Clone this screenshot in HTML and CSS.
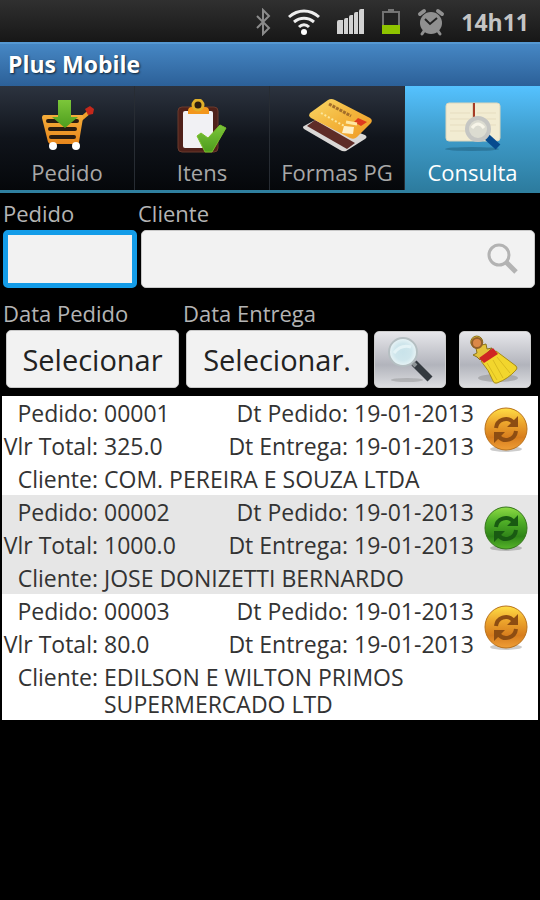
FILE: index.html
```
<!DOCTYPE html>
<html lang="pt-BR">
<head>
<meta charset="utf-8">
<meta name="viewport" content="width=device-width, initial-scale=1">
<title>Plus Mobile</title>
<link rel="stylesheet" href="styles.css">
</head>
<body>
<svg class="defs" aria-hidden="true">
  <defs>
    <linearGradient id="orange" x2="0" y2="1"><stop offset="0" stop-color="#ffdf45"/><stop offset=".35" stop-color="#eda62d"/><stop offset=".7" stop-color="#d77d1d"/><stop offset="1" stop-color="#ef9e36"/></linearGradient>
    <linearGradient id="green" x2="0" y2="1"><stop offset="0" stop-color="#8fdc45"/><stop offset=".35" stop-color="#4fae27"/><stop offset=".7" stop-color="#2f8418"/><stop offset="1" stop-color="#57b52a"/></linearGradient>
    <linearGradient id="leaf" x2="0" y2="1"><stop offset="0" stop-color="#7cc63a"/><stop offset="1" stop-color="#4d9c1d"/></linearGradient>
    <linearGradient id="basket" x2="0" y2="1"><stop offset="0" stop-color="#f5ad3a"/><stop offset="1" stop-color="#e8871c"/></linearGradient>
    <linearGradient id="gold" x2="1" y2="1"><stop offset="0" stop-color="#f9d867"/><stop offset=".5" stop-color="#f3b53c"/><stop offset="1" stop-color="#ef9a26"/></linearGradient>
    <radialGradient id="glass"><stop offset="0" stop-color="#c9e3ea"/><stop offset=".6" stop-color="#cfe6ec"/><stop offset="1" stop-color="#eaf5f7"/></radialGradient>
    <symbol id="cycle" viewBox="0 0 44 46">
      <path fill="none" stroke-width="4" d="M12 21a10 10 0 0 1 17-6M32 24a10 10 0 0 1-17 6"/>
      <path stroke="none" d="M34 9v11H23zM10 36V25h11z"/>
    </symbol>
  </defs>
</svg>

<header class="status">
  <svg width="16" height="28" viewBox="0 0 16 28" fill="none" stroke="#8b8b8b" stroke-width="2"><path d="M2 8l12 12-6 6V2l6 6L2 20"/></svg>
  <svg width="34" height="28" viewBox="0 0 34 28" fill="none" stroke="#eee" stroke-width="3"><path d="M2 9c9-8 21-8 30 0M7 14c6-5 14-5 20 0M12 19c3-3 7-3 10 0"/><circle cx="17" cy="24" r="3" fill="#fff" stroke="none"/></svg>
  <svg width="28" height="28" viewBox="0 0 28 28" fill="#d2d2d2"><path d="M0 14q0-2 2-2h4v14H0z"/><path d="M7 12q0-2 2-2h2v16H7zM12 9q0-2 2-2h2v19h-4zM17 6q0-2 2-2h2v22h-4zM22 3q0-2 2-2h3v25h-5z"/></svg>
  <svg width="20" height="28" viewBox="0 0 20 28"><path d="M2 4h16v21H2z" fill="#222" stroke="#727272" stroke-width="2"/><path d="M7 1h6v3H7z" fill="#777"/><path d="M1 17h18v9H1z" fill="#8fc400"/></svg>
  <svg width="28" height="28" viewBox="0 0 28 28"><g stroke="#909090" stroke-width="4" stroke-linecap="round"><path d="M3 6l4-3M25 6l-4-3"/><path d="M7 23l-2 3M21 23l2 3" stroke-width="3"/></g><circle cx="14" cy="15" r="11" fill="#909090"/><path d="M8 11l5 5 7-6" fill="none" stroke="#222" stroke-width="2"/></svg>
  <time class="clock">14h11</time>
</header>

<h1 class="title">Plus Mobile</h1>

<nav class="tabs">
  <a class="tab" href="#pedido">
    <svg width="56" height="56" viewBox="0 0 56 56">
      <path d="M42 20l7-6" stroke="#f0a02b" stroke-width="4"/><path d="M46 10l5-3 4 3-1 5-5 1z" fill="#c4281b"/>
      <path d="M5 16h38q2 0 1 3l-4 24q0 2-3 2H12q-2 0-3-2L3 19q0-3 2-3z" fill="url(#basket)"/>
      <path d="M9 22h29M11 30h25M12 38h23" stroke="#2a1c10" stroke-width="4" stroke-linecap="round"/>
      <path d="M19 1h13v17h7L26 29 13 18h6z" fill="url(#leaf)"/>
      <circle cx="14" cy="47" r="4" fill="#fff"/><circle cx="37" cy="47" r="4" fill="#fff"/>
    </svg>
    <span>Pedido</span></a>
  <a class="tab" href="#itens">
    <svg width="56" height="56" viewBox="0 0 56 56">
      <rect x="4" y="8" width="40" height="45" rx="4" fill="#4f211a" stroke="#6b3a2d"/>
      <rect x="9" y="12" width="30" height="37" rx="2" fill="#f1f1f4"/>
      <path d="M14 12q0-4 4-4h2a6 6 0 0 1 9 0h2q4 0 4 4v3H14z" fill="#f3971c"/>
      <circle cx="24" cy="6" r="5" fill="#2b1c10" stroke="#e0b02a" stroke-width="3"/>
      <path d="M23 37l4-3 7 5 12-13 6 3-14 24h-7z" fill="url(#leaf)" stroke="#79bd28" stroke-linejoin="round"/>
    </svg>
    <span>Itens</span></a>
  <a class="tab" href="#formas">
    <svg width="70" height="56" viewBox="0 0 70 56">
      <path d="M2 27l15-8 46 17q3 2 0 4L44 52q-3 1-6-1L2 30q-2-2 0-3z" fill="#dad8d6"/>
      <path d="M9 24l4-3 40 23-8 6L5 27z" fill="#5e2c27"/>
      <path d="M8 14L26 1q3-2 7 0l35 18q3 2 1 5L55 38q-3 3-7 1L9 19q-3-2-1-5z" fill="url(#gold)"/>
      <path d="M27 5l22 12" stroke="#a36e2a" stroke-width="3" stroke-dasharray="3 1"/><path d="M19 14l25 14" stroke="#fbe79d" stroke-width="2" stroke-dasharray="2 2"/>
      <path d="M56 19l9 4-6 4-7-4z" fill="#de3a1e"/><path d="M42 27l10 1-1 7-11-1z" fill="#fff0c8"/><path d="M44 23l11 2" stroke="#ffe7a2" stroke-width="3"/>
    </svg>
    <span>Formas PG</span></a>
  <a class="tab tab-active" href="#consulta" aria-current="page">
    <svg width="58" height="56" viewBox="0 0 58 56">
      <ellipse cx="28" cy="50" rx="27" ry="2" fill="#21617f" opacity=".55"/>
      <rect x="2" y="4" width="54" height="38" rx="3" fill="#f2ecd2" stroke="#dcd6bc"/>
      <path d="M6 14h20M6 20h20M6 26h20M6 32h20M33 14h19M33 20h19M33 26h19" stroke="#e6ddc0"/>
      <path d="M29 4v37" stroke="#cbbf9e"/><path d="M30 4v16" stroke="#a63b27" stroke-width="2"/>
      <path d="M43 38l11 10" stroke="#074b8f" stroke-width="7"/>
      <circle cx="34" cy="30" r="11" fill="#dcdcd1" stroke="#c5c6c3" stroke-width="4"/><path d="M28 29q6-8 12 0" stroke="#f7f5e9" stroke-width="3" fill="none"/>
    </svg>
    <span>Consulta</span></a>
</nav>

<main>
  <form class="search">
    <div class="row row-text">
      <div class="field"><label for="pedido">Pedido</label><input id="pedido" class="box box-focus" type="text"></div>
      <div class="field"><label for="cliente">Cliente</label>
        <div class="box box-client"><input id="cliente" type="text">
          <svg width="32" height="32" viewBox="0 0 32 32" fill="none" stroke="#b3b3b3"><circle cx="12" cy="12" r="10" stroke-width="3"/><path d="M19 19l10 10" stroke-width="5"/></svg>
        </div></div>
    </div>
    <div class="row row-dates">
      <div class="field"><label for="data-pedido">Data Pedido</label><button id="data-pedido" class="box date" type="button">Selecionar</button></div>
      <div class="field"><label for="data-entrega">Data Entrega</label><button id="data-entrega" class="box date" type="button">Selecionar.</button></div>
      <button class="tool" type="button" aria-label="Pesquisar">
        <svg width="50" height="50" viewBox="0 0 50 50"><ellipse cx="22" cy="45" rx="16" ry="2" fill="#777" opacity=".35"/><path d="M29 28l16 16" stroke="#343a40" stroke-width="7"/><path d="M26 26l5 5" stroke="#8d9396" stroke-width="4"/><circle cx="18" cy="17" r="14" fill="url(#glass)" stroke="#b5bfc2" stroke-width="2"/><path d="M9 18q7-9 17-6" fill="none" stroke="#e4f3f6" stroke-width="3"/></svg>
      </button>
      <button class="tool" type="button" aria-label="Limpar">
        <svg width="50" height="50" viewBox="0 0 50 50"><ellipse cx="28" cy="43" rx="20" ry="4" fill="#777" opacity=".4"/><path d="M3 20l4-2-1-5a6 6 0 1 1 6-3l4-1 1 5 5-1-12 12-3-3z" fill="#e3c23a" stroke="#8b741b"/><circle cx="7" cy="8" r="5" fill="#db8848" stroke="#93602a" stroke-width="2"/><path d="M11 26l15-10 20 15q2 2 0 4-8 9-19 13-3 1-4-2-4-11-12-20z" fill="#f2d62d" stroke="#a68c17"/><path d="M17 28l10 17M23 25l10 18M27 22l13 16" stroke="#d9bb20" fill="none"/><path d="M9 23l14-10 5 6-14 9z" fill="#cf2623"/></svg>
      </button>
    </div>
  </form>

  <ul class="orders">
    <li class="order">
      <dl>
        <dt>Pedido:</dt><dd>00001</dd><dt>Dt Pedido:</dt><dd>19-01-2013</dd>
        <dt>Vlr Total:</dt><dd>325.0</dd><dt>Dt Entrega:</dt><dd>19-01-2013</dd>
        <dt>Cliente:</dt><dd class="client">COM. PEREIRA E SOUZA LTDA</dd>
      </dl>
      <svg class="sync sync-pending" viewBox="0 0 44 46"><ellipse cx="22" cy="42" rx="16" ry="3" class="shade"/><circle cx="22" cy="22" r="21"/><use href="#cycle" class="glyph"/></svg>
    </li>
    <li class="order">
      <dl>
        <dt>Pedido:</dt><dd>00002</dd><dt>Dt Pedido:</dt><dd>19-01-2013</dd>
        <dt>Vlr Total:</dt><dd>1000.0</dd><dt>Dt Entrega:</dt><dd>19-01-2013</dd>
        <dt>Cliente:</dt><dd class="client">JOSE DONIZETTI BERNARDO</dd>
      </dl>
      <svg class="sync sync-done" viewBox="0 0 44 46"><ellipse cx="22" cy="42" rx="16" ry="3" class="shade"/><circle cx="22" cy="22" r="21"/><use href="#cycle" class="glyph"/></svg>
    </li>
    <li class="order">
      <dl>
        <dt>Pedido:</dt><dd>00003</dd><dt>Dt Pedido:</dt><dd>19-01-2013</dd>
        <dt>Vlr Total:</dt><dd>80.0</dd><dt>Dt Entrega:</dt><dd>19-01-2013</dd>
        <dt>Cliente:</dt><dd class="client">EDILSON E WILTON PRIMOS SUPERMERCADO LTD</dd>
      </dl>
      <svg class="sync sync-pending" viewBox="0 0 44 46"><ellipse cx="22" cy="42" rx="16" ry="3" class="shade"/><circle cx="22" cy="22" r="21"/><use href="#cycle" class="glyph"/></svg>
    </li>
  </ul>
</main>
</body>
</html>
```
FILE: styles.css
```
* { box-sizing: border-box; }
body {
  margin: 0;
  min-height: 100vh;
  background: #000;
  color: #b4b4b4;
  font: 23px/27px "Open Sans", "Noto Sans", sans-serif;
}
button, input { font: inherit; }
.defs { position: absolute; width: 0; height: 0; }

.status {
  display: flex;
  align-items: center;
  justify-content: flex-end;
  gap: 16px;
  height: 42px;
  padding: 2px 11px 0 0;
  background: linear-gradient(#303030, #171717);
}
.clock { color: #c4c4c4; font-size: 23px; font-weight: 700; }

.title {
  margin: 0;
  height: 44px;
  padding: 0 8px;
  border-top: 2px solid #5598d2;
  background: linear-gradient(#4687c4, #2c6098);
  color: #fff;
  font-size: 23px;
  line-height: 40px;
  text-shadow: 1px 1px 2px #123;
}

.tabs {
  display: grid;
  grid-template-columns: repeat(4, 1fr);
  border-bottom: 3px solid #2f7f9f;
}
.tab {
  display: flex;
  flex-direction: column;
  align-items: center;
  gap: 4px;
  height: 104px;
  padding-top: 13px;
  border-right: 1px solid #272c33;
  background: linear-gradient(#2c333f, #10141b 50%, #05070a);
  color: #a8a8a8;
  font-size: 22px;
  text-decoration: none;
  white-space: nowrap;
}
.tab-active {
  border-right: 0;
  background: linear-gradient(#55c2ff, #3f9dcc 45%, #2d7c9f);
  color: #fff;
}

.search { padding: 7px 5px 8px 3px; }
.row { display: grid; }
.row-text { grid-template-columns: 135px 1fr; margin-bottom: 12px; }
.row-dates { grid-template-columns: 179fr 190fr 81fr 79fr; align-items: end; }
.field { display: flex; flex-direction: column; gap: 3px; min-width: 0; }
.field label { font-size: 22px; }
.box {
  height: 58px;
  border: 1px solid #c8c8c8;
  border-radius: 5px;
  background: #f2f2f2;
  color: #222;
}
.row-text .box { margin-left: 3px; }
.row-text .box-focus {
  width: 134px;
  margin-left: 0;
  border: 5px solid #139ce8;
  outline: 0;
}
.box-client { display: flex; align-items: center; padding: 0 15px 0 8px; }
.box-client input { flex: 1; min-width: 0; border: 0; background: none; outline: 0; }
.date { margin: 0 4px 0 3px; padding: 0; font-size: 29px; }
.field + .field .date { margin-right: 6px; }
.tool {
  display: flex;
  align-items: center;
  justify-content: center;
  width: 72px;
  height: 57px;
  padding: 0;
  border: 1px solid #ccc;
  border-radius: 5px;
  background: linear-gradient(#e6e6ea, #b2b4bc 60%, #dcdde0);
}
.tool:last-child { justify-self: center; }

.orders { margin: 0 2px; padding: 0; list-style: none; color: #333; }
.order { display: flex; padding-right: 10px; background: #fff; }
.order:nth-child(even) { background: #e6e6e6; }
dl {
  flex: 1;
  display: grid;
  grid-template-columns: 96px 1fr auto auto;
  column-gap: 6px;
  margin: 0;
}
dt, dd { margin: 0; padding: 4px 0 2px; }
dt { text-align: right; white-space: nowrap; }
.client { grid-column: 2 / -1; }
.sync { width: 44px; height: 46px; margin: 11px 0 0 10px; }
.sync-pending circle { fill: url(#orange); stroke: #b9721c; }
.sync-done circle { fill: url(#green); stroke: #35761c; }
.sync-pending .glyph { fill: #8d4d12; stroke: #8d4d12; }
.sync-done .glyph { fill: #195a12; stroke: #195a12; }
.shade { fill: #000; opacity: .2; }
```
